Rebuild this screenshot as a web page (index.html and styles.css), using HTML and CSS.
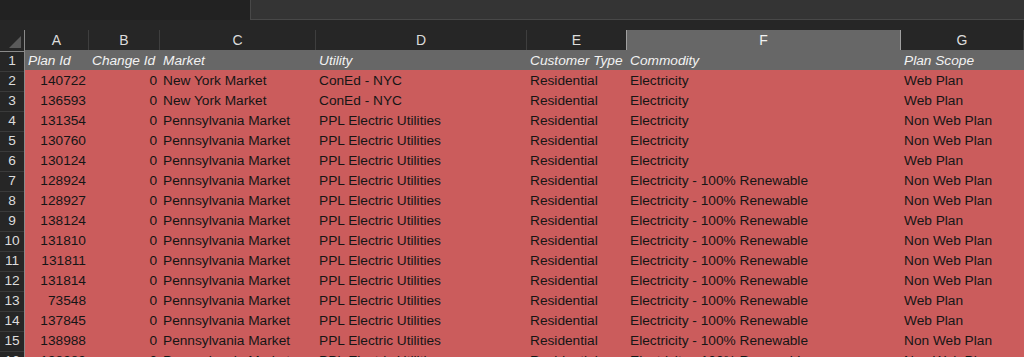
FILE: index.html
```html
<!DOCTYPE html>
<html lang="en">
<head>
    <meta charset="UTF-8">
    <meta name="viewport" content="width=device-width, initial-scale=1.0">
    <title>Plans - Excel</title>
    <link rel="stylesheet" href="styles.css">
</head>
<body>
    <!-- Barra de nombre y fórmula -->
    <div class="topbar">
        <div class="namebox"></div>
        <div class="formula"></div>
    </div>
    <div class="spacer"></div>

    <div class="sheet">
        <!-- Letras de columnas -->
        <div class="row colheads">
            <div class="corner"><span class="triangle"></span></div>
            <div class="colhead">A</div>
            <div class="colhead">B</div>
            <div class="colhead">C</div>
            <div class="colhead">D</div>
            <div class="colhead">E</div>
            <div class="colhead selected">F</div>
            <div class="colhead">G</div>
        </div>

        <!-- Fila de títulos -->
        <div class="row">
            <div class="rownum">1</div>
            <div class="cell title">Plan Id</div>
            <div class="cell title">Change Id</div>
            <div class="cell title">Market</div>
            <div class="cell title">Utility</div>
            <div class="cell title">Customer Type</div>
            <div class="cell title">Commodity</div>
            <div class="cell title">Plan Scope</div>
        </div>

        <div id="rows">
            <!-- Las filas se cargan aquí -->
        </div>
    </div>

    <script>
        const NY = ["New York Market", "ConEd - NYC"];
        const PA = ["Pennsylvania Market", "PPL Electric Utilities"];
        const E = "Electricity";
        const R = "Electricity - 100% Renewable";

        const data = [
            [140722, NY, E, "Web Plan"],
            [136593, NY, E, "Web Plan"],
            [131354, PA, E, "Non Web Plan"],
            [130760, PA, E, "Non Web Plan"],
            [130124, PA, E, "Web Plan"],
            [128924, PA, R, "Non Web Plan"],
            [128927, PA, R, "Non Web Plan"],
            [138124, PA, R, "Web Plan"],
            [131810, PA, R, "Non Web Plan"],
            [131811, PA, R, "Non Web Plan"],
            [131814, PA, R, "Non Web Plan"],
            [73548, PA, R, "Web Plan"],
            [137845, PA, R, "Web Plan"],
            [138988, PA, R, "Non Web Plan"],
            [138989, PA, R, "Non Web Plan"]
        ];

        const rows = document.getElementById("rows");
        data.forEach((d, i) => {
            const row = document.createElement("div");
            row.className = "row";
            row.innerHTML = `
                <div class="rownum">${i + 2}</div>
                <div class="cell fill num">${d[0]}</div>
                <div class="cell fill num">0</div>
                <div class="cell fill">${d[1][0]}</div>
                <div class="cell fill">${d[1][1]}</div>
                <div class="cell fill">Residential</div>
                <div class="cell fill">${d[2]}</div>
                <div class="cell fill">${d[3]}</div>
            `;
            rows.appendChild(row);
        });
    </script>
</body>
</html>
```

FILE: styles.css
```css
/* General */
body {
    margin: 0;
    background: #262626;
    font-family: "Liberation Sans", Arial, sans-serif;
    font-size: 13.7px;
    overflow: hidden;
}

/* Barra superior */
.topbar {
    display: flex;
    height: 20px;
    background: #222;
}

.namebox {
    width: 250px;
}

.formula {
    flex: 1;
    height: 19px;
    background: #343434;
    border-left: 1px solid #484848;
    border-bottom: 1px solid #484848;
}

.spacer {
    height: 10px;
}

/* Hoja */
.row {
    display: grid;
    grid-template-columns: 25px 64px 71px 156px 211px 100px 274px 123px;
    height: 20px;
}

.corner {
    position: relative;
    box-sizing: border-box;
    border-right: 1px solid #8a8a8a;
    border-bottom: 1px solid #8a8a8a;
}

.triangle {
    position: absolute;
    right: 3px;
    bottom: 3px;
    width: 0;
    height: 0;
    border-left: 12px solid transparent;
    border-bottom: 12px solid #5a5a5a;
}

.colhead {
    box-sizing: border-box;
    border-right: 1px solid #3e3e3e;
    border-bottom: 1px solid #8a8a8a;
    color: #dcdcdc;
    font-size: 14px;
    text-align: center;
    line-height: 21px;
}

.colhead.selected {
    background: #676767;
    color: #f2f2f2;
    border-left: 1px solid #a0a0a0;
    border-right: 1px solid #a0a0a0;
    border-bottom: 2px solid #1f7244;
    margin-left: -1px;
    line-height: 20px;
}

.rownum {
    box-sizing: border-box;
    border-right: 1px solid #8a8a8a;
    border-bottom: 1px solid #3a3a3a;
    color: #dcdcdc;
    text-align: center;
    line-height: 21px;
}

.cell {
    padding: 0 3px;
    line-height: 21px;
    white-space: nowrap;
    overflow: hidden;
}

.title {
    background: #676767;
    color: #f2f2f2;
    font-style: italic;
}

.fill {
    background: #cb5c5c;
    color: #161616;
}

.num {
    text-align: right;
}
```
